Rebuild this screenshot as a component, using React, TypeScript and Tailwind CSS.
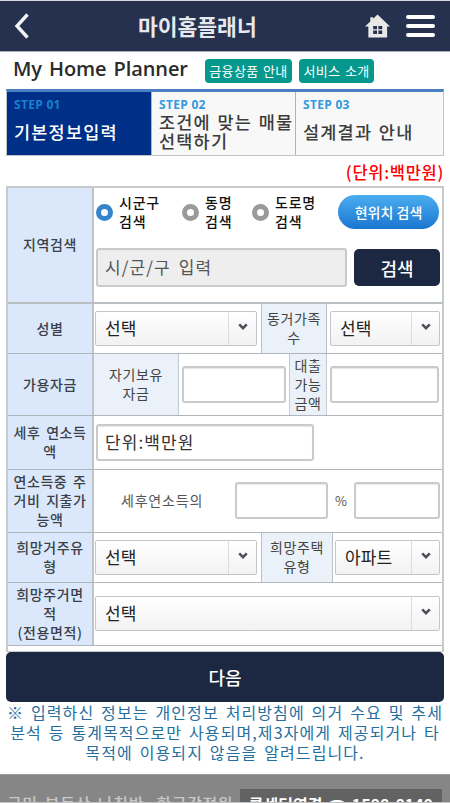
import React, { useState } from "react";
import clsx from "clsx";

const Lines = ({ items, className }: { items: string[]; className?: string }) => (
  <div className={clsx("whitespace-nowrap", className)}>
    {items.map((line) => (
      <div key={line}>{line}</div>
    ))}
  </div>
);

const RowLabel = ({ items }: { items: string[] }) => (
  <div className="flex w-[86px] shrink-0 items-center justify-center border-r-2 border-[#bfc4c9] bg-[#dbe8fb] pb-px">
    <Lines items={items} className="text-center text-[14px] font-medium leading-[19px] tracking-[0.6px] [word-spacing:2px] text-[#3a3f48]" />
  </div>
);

const SubLabel = ({ items, className }: { items: string[]; className?: string }) => (
  <div className={clsx("flex shrink-0 items-center justify-center bg-[#ebf1f8] pb-px", className)}>
    <Lines items={items} className="text-center text-[14px] leading-[19px] tracking-[0.6px] text-[#444]" />
  </div>
);

const SelectBox = ({ value, className }: { value: string; className?: string }) => (
  <button
    className={clsx(
      "flex h-[35px] shrink-0 items-center justify-between rounded-[2px] border border-[#c6c6c6] bg-linear-to-b from-white to-[#f2f2f2] pl-[9px]",
      className
    )}
  >
    <span className="whitespace-nowrap pb-[2px] text-[17px] leading-none tracking-[0.1px] text-[#222]">{value}</span>
    <span className="flex h-full w-[28px] items-center justify-center border-l border-[#dcdcdc]">
      <svg className="mb-[2px]" width="10" height="8" viewBox="0 0 10 8" fill="none">
        <path d="M1.2 1.3 5 5.2 8.8 1.3" stroke="#4b5058" strokeWidth="2.5" />
      </svg>
    </span>
  </button>
);

const TextBox = ({ placeholder, className }: { placeholder?: string; className?: string }) => (
  <input
    placeholder={placeholder}
    className={clsx(
      "h-[37px] shrink-0 rounded-[3px] border-2 border-[#cacaca] pb-[2px] pl-[7px] text-[17px] tracking-[1.1px] shadow-[inset_0_1px_1px_#e8e8e8] outline-none [word-spacing:3px]",
      className
    )}
  />
);

const Radio = ({ items, checked, onClick, className }: { items: string[]; checked: boolean; onClick: () => void; className?: string }) => (
  <button onClick={onClick} className={clsx("flex shrink-0 items-center gap-[6px] text-left", className)}>
    <span
      className={clsx(
        "h-[17px] w-[17px] shrink-0 rounded-full border-[5px] bg-white",
        checked ? "border-[#3584cb]" : "border-[#9a9a9a]"
      )}
    />
    <Lines items={items} className="text-[14px] font-medium leading-[19px] tracking-[0.8px] text-[#111]" />
  </button>
);

const Step = ({ no, items, active, className }: { no: string; items: string[]; active?: boolean; className?: string }) => (
  <div className={clsx("shrink-0 pl-[7px]", active ? "bg-[#002f87]" : "bg-[#f8f8f8]", className)}>
    <div
      className={clsx(
        "pt-[6px] font-['Open_Sans',sans-serif] text-[12px] font-bold leading-[13px] tracking-[0.3px]",
        active ? "text-[#1582d0]" : "text-[#3298df]"
      )}
    >
      {no}
    </div>
    <div className="flex h-[40px] items-center">
      <Lines
        items={items}
        className={clsx("text-[17.5px] font-medium leading-[19px] tracking-[1.2px] [word-spacing:1.5px]", active ? "text-white" : "text-[#3c3c3c]")}
      />
    </div>
  </div>
);

const searchTypes = [
  { items: ["시군구", "검색"], className: "w-[86px]" },
  { items: ["동명", "검색"], className: "w-[70px]" },
  { items: ["도로명", "검색"], className: "w-[86px]" },
];

export default function App() {
  const [searchType, setSearchType] = useState(0);

  return (
    <div className="h-[803px] w-[450px] overflow-hidden bg-white font-['Noto_Sans_CJK_KR',sans-serif]">
      <header className="flex h-[52px] items-center border-b border-t border-b-[#a9afbd] border-t-[#d5d8dc] bg-[#25314e]">
        <svg className="ml-[14px] shrink-0" width="16" height="26" viewBox="0 0 16 26" fill="none">
          <path d="M13.5 1.5 3 13l10.5 11.5" stroke="#f2f3f5" strokeWidth="3.4" />
        </svg>
        <h1 className="ml-[108px] w-[226px] whitespace-nowrap text-[21.5px] font-bold leading-none text-[#e6e8ed]">마이홈플래너</h1>
        <svg className="ml-px shrink-0" width="25" height="24" viewBox="0 0 26 24">
          <path d="M13 0 26 12.5H23V24H3.5V12.5H0L5.5 7.300V3h3v1.500Z" fill="#e8e8e6" />
          <path d="M8.500 12h4v3.500h-4zM13.900 12h4v3.500h-4zM8.500 16.700h4v3.500h-4zM13.900 16.700h4v3.500h-4z" fill="#25314e" />
        </svg>
        <div className="ml-[16px] flex flex-col gap-[5px]">
          <span className="h-[4px] w-[29px] rounded-full bg-white" />
          <span className="h-[4px] w-[29px] rounded-full bg-white" />
          <span className="h-[4px] w-[29px] rounded-full bg-white" />
        </div>
      </header>

      <div className="flex h-[37px] items-center pl-[13px]">
        <h2 className="w-[192px] whitespace-nowrap pb-[4px] font-['Open_Sans',sans-serif] text-[20px] font-semibold tracking-[-0.1px] [word-spacing:2px] text-[#2b2b2b]">
          My Home Planner
        </h2>
        <button className="mr-[7px] h-[24px] w-[87px] whitespace-nowrap rounded-[4px] bg-[#05998e] text-[13px] leading-none tracking-[0.3px] text-white [word-spacing:1.5px]">
          금융상품 안내
        </button>
        <button className="h-[24px] w-[75px] whitespace-nowrap rounded-[4px] bg-[#05998e] text-[13px] leading-none tracking-[0.3px] text-white [word-spacing:1.5px]">
          서비스 소개
        </button>
      </div>

      <main className="ml-[6px] w-[438px]">
        <div className="flex h-[67px] border border-t-[3px] border-[#bfc4c9] border-t-[#4a7fc1]">
          <Step no="STEP 01" items={["기본정보입력"]} active className="w-[144px]" />
          <Step no="STEP 02" items={["조건에 맞는 매물", "선택하기"]} className="w-[144px] border-l border-[#aeb4ba]" />
          <Step no="STEP 03" items={["설계결과 안내"]} className="w-[148px] border-l border-[#aeb4ba]" />
        </div>
        <p className="h-[30px] pt-[3px] text-right text-[16.5px] font-medium leading-[27px] tracking-[0.7px] text-[#f00]">(단위:백만원)</p>

        <div className="h-[466px] border-2 border-b border-[#c5cacd]">
          <div className="flex h-[116px] border-b-2 border-[#b9bec3]">
            <RowLabel items={["지역검색"]} />
            <div className="px-[2px] pt-[5px]">
              <div className="flex h-[38px] items-center">
                {searchTypes.map((type, index) => (
                  <Radio
                    key={type.items[0]}
                    items={type.items}
                    checked={searchType === index}
                    onClick={() => setSearchType(index)}
                    className={type.className}
                  />
                ))}
                <button className="h-[34px] w-[101px] shrink-0 whitespace-nowrap rounded-full bg-linear-to-b from-[#4badf0] to-[#1976d0] text-[14px] font-medium leading-none text-white">
                  현위치 검색
                </button>
              </div>
              <div className="mt-[17px] flex items-center">
                <TextBox placeholder="시/군/구 입력" className="h-[39px] w-[251px] border-[#b8b8b8] bg-[#eee] placeholder:text-[#555]" />
                <button className="ml-[7px] h-[37px] w-[86px] rounded-[5px] bg-[#1c2741] text-[18px] font-medium leading-none text-white">검색</button>
              </div>
            </div>
          </div>

          <div className="flex h-[50px] border-b border-[#b0b6bc]">
            <RowLabel items={["성별"]} />
            <div className="flex w-[167px] items-center pb-px pl-px">
              <SelectBox value="선택" className="w-[162px]" />
            </div>
            <SubLabel items={["동거가족", "수"]} className="w-[66px] border-x border-[#b9c0c8]" />
            <div className="flex items-center pb-px pl-[3px]">
              <SelectBox value="선택" className="w-[110px]" />
            </div>
          </div>

          <div className="flex h-[62px] border-b border-[#b0b6bc]">
            <RowLabel items={["가용자금"]} />
            <SubLabel items={["자기보유", "자금"]} className="w-[85px] border-r border-[#c5cacf]" />
            <div className="flex w-[110px] items-center pl-[3px]">
              <TextBox className="w-[104px]" />
            </div>
            <SubLabel items={["대출", "가능", "금액"]} className="w-[38px] border-x border-[#c5cacf]" />
            <div className="flex items-center pl-[3px]">
              <TextBox className="w-[109px]" />
            </div>
          </div>

          <div className="flex h-[54px] border-b border-[#b0b6bc]">
            <RowLabel items={["세후 연소득", "액"]} />
            <div className="flex items-center pl-[2px]">
              <TextBox placeholder="단위:백만원" className="w-[218px] placeholder:text-[#333]" />
            </div>
          </div>

          <div className="flex h-[63px] border-b border-[#b0b6bc]">
            <RowLabel items={["연소득중 주", "거비 지출가", "능액"]} />
            <div className="flex items-center pb-px pl-[27px] text-[14px] text-[#555]">
              <span className="w-[114px] whitespace-nowrap tracking-[0.8px]">세후연소득의</span>
              <TextBox className="w-[93px]" />
              <span className="w-[26px] text-center text-[13px]">%</span>
              <TextBox className="w-[86px]" />
            </div>
          </div>

          <div className="flex h-[50px] border-b border-[#b0b6bc]">
            <RowLabel items={["희망거주유", "형"]} />
            <div className="flex w-[167px] items-center pb-px pl-px">
              <SelectBox value="선택" className="w-[162px]" />
            </div>
            <SubLabel items={["희망주택", "유형"]} className="w-[72px] border-x border-[#b9c0c8]" />
            <div className="flex items-center pb-px pl-[2px]">
              <SelectBox value="아파트" className="w-[105px]" />
            </div>
          </div>

          <div className="flex h-[63px] border-b border-[#b0b6bc]">
            <RowLabel items={["희망주거면", "적", "(전용면적)"]} />
            <div className="flex items-center pb-[2px] pl-px">
              <SelectBox value="선택" className="w-[345px]" />
            </div>
          </div>
        </div>

        <button className="block h-[50px] w-full rounded-[5px] bg-[#1c2741] text-[18px] font-medium leading-none text-white">다음</button>
        <Lines
          items={[
            "※ 입력하신 정보는 개인정보 처리방침에 의거 수요 및 추세",
            "분석 등 통계목적으로만 사용되며,제3자에게 제공되거나 타",
            "목적에 이용되지 않음을 알려드립니다.",
          ]}
          className="flex h-[72px] flex-col items-center text-[16px] leading-[20px] tracking-[1.1px] [word-spacing:2.200px] text-[#256f9f]"
        />
      </main>

      <footer className="flex h-[29px] justify-between overflow-hidden border-b border-t border-b-[#c4c4c4] border-t-[#9b9b9b] bg-[#868686] pl-[7px] pr-[8px] pt-[14px]">
        <span className="whitespace-nowrap pt-[4px] text-[16px] font-medium leading-[20px] tracking-[0.6px] [word-spacing:3px] text-[#c9c9c9]">
          국민 부동산 나침반, 한국감정원
        </span>
        <div className="flex h-[30px] w-[202px] shrink-0 items-start justify-center whitespace-nowrap bg-[#626262] pt-[5px] text-[16px] font-bold leading-[20px] text-white [word-spacing:3px]">
          콜센터연결 ☎ 1588-8149
        </div>
      </footer>
    </div>
  );
}
